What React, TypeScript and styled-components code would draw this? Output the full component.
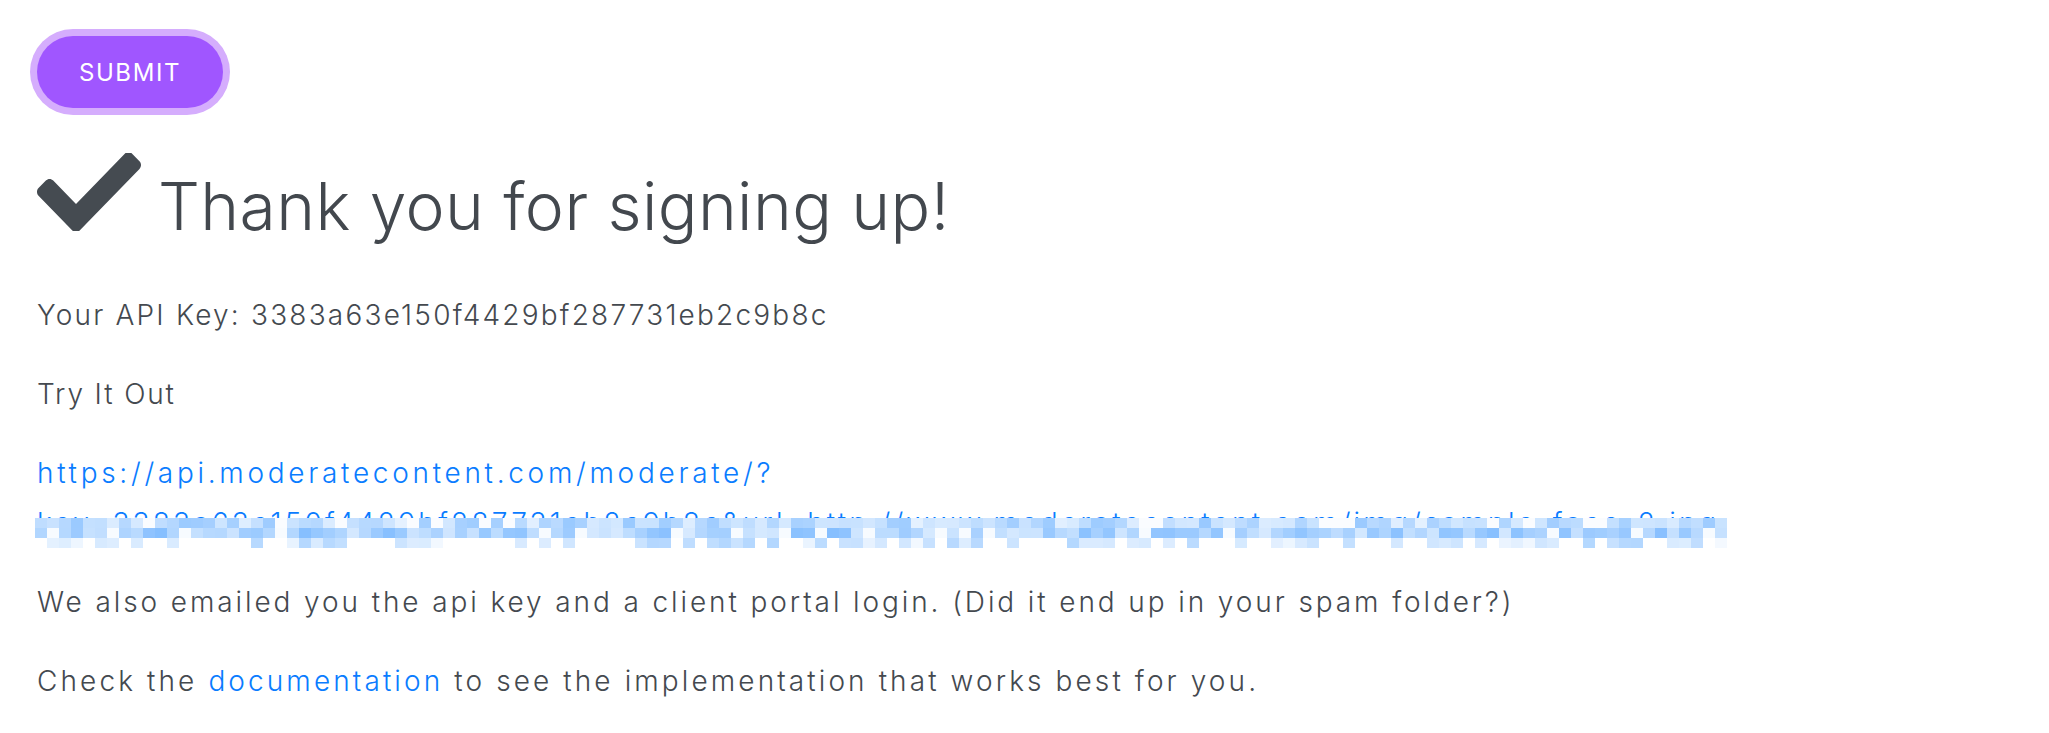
import React from "react";
import styled, { createGlobalStyle } from "styled-components";

const GlobalStyle = createGlobalStyle`
  html, body { margin: 0; padding: 0; background: #ffffff; }
  body { font-family: Inter, "Noto Sans", "Liberation Sans", sans-serif; color: #44494f; }
`;

const Page = styled.div`
  padding: 36px 37px 0 37px;
`;

const SubmitButton = styled.button`
  display: block;
  width: 186px;
  height: 72px;
  margin: 0;
  padding: 0;
  border: none;
  border-radius: 36px;
  background: #a056ff;
  box-shadow: 0 0 0 7px #d5adfd;
  color: #ffffff;
  font-family: Inter, "Liberation Sans", sans-serif;
  font-size: 24px;
  font-weight: 400;
  letter-spacing: 1.6px;
  text-transform: uppercase;
  cursor: pointer;
`;

const Heading = styled.h1`
  display: flex;
  align-items: flex-start;
  gap: 17px;
  margin: 59px 0 43.6px 0;
  font-size: 66px;
  line-height: 79.2px;
  font-weight: 300;
  letter-spacing: 0.4px;
  color: #43484e;
`;

const CheckSvg = styled.svg`
  flex: none;
  width: 104px;
  height: 78px;
  margin-top: -14px;
  fill: #454b51;
`;

const Para = styled.p<{ $spacing?: number }>`
  margin: 0 0 28.6px 0;
  font-size: 28px;
  line-height: 50.4px;
  font-weight: 300;
  letter-spacing: ${(p) => p.$spacing ?? 2.9}px;
  color: #44494f;
  white-space: nowrap;
`;

const Link = styled.a`
  color: #0a7cff;
  text-decoration: none;
`;

const Redacted = styled.span`
  position: relative;
  display: inline-block;
  letter-spacing: 3.2px;
`;

const Mosaic = styled.span`
  position: absolute;
  left: -2px;
  top: 20px;
  display: grid;
  grid-template-columns: repeat(141, 12px);
  grid-auto-rows: 10px;
`;

const Cell = styled.span`
  display: block;
`;

const CheckIcon = () => (
  <CheckSvg viewBox="0 69 512 373" preserveAspectRatio="none">
    <path d="M173.898 439.404l-166.4-166.4c-9.997-9.997-9.997-26.206 0-36.204l36.203-36.204c9.997-9.998 26.207-9.998 36.204 0L192 312.69 432.095 72.596c9.997-9.997 26.207-9.997 36.204 0l36.203 36.204c9.997 9.997 9.997 26.206 0 36.204l-294.4 294.401c-9.998 9.997-26.207 9.997-36.204-.001z" />
  </CheckSvg>
);

function buildCells() {
  let seed = 1234567;
  const rand = () => {
    seed = (seed * 1103515245 + 12345) % 2147483648;
    return seed / 2147483648;
  };
  const cells: string[] = [];
  const cols = 141;
  for (let r = 0; r < 3; r++) {
    for (let c = 0; c < cols; c++) {
      const v = rand();
      let a: number;
      if (r === 2) {
        a = v < 0.55 ? 0 : 0.04 + rand() * 0.26;
      } else if (r === 0) {
        a = v < 0.12 ? 0.02 : 0.1 + rand() * 0.3;
      } else {
        a = v < 0.1 ? 0.03 : 0.16 + rand() * 0.32;
      }
      const mix = (base: number) => Math.round(255 - (255 - base) * a);
      cells.push(`rgb(${mix(0)}, ${mix(120)}, 255)`);
    }
  }
  return cells;
}

const mosaicCells = buildCells();

export default function App() {
  return (
    <>
      <GlobalStyle />
      <Page>
        <SubmitButton type="button">Submit</SubmitButton>
        <Heading>
          <CheckIcon />
          <span>Thank you for signing up!</span>
        </Heading>
        <Para $spacing={2.2}>Your API Key: 3383a63e150f4429bf287731eb2c9b8c</Para>
        <Para $spacing={1.85}>Try It Out</Para>
        <Para $spacing={3.7}>
          <Link href="#">
            https://api.moderatecontent.com/moderate/?
            <br />
            <Redacted>
              key=3383a63e150f4429bf287731eb2c9b8c&amp;url=http://www.moderatecontent.com/img/sample_face_2.jpg
              <Mosaic aria-hidden="true">
                {mosaicCells.map((bg, i) => (
                  <Cell key={i} style={{ background: bg }} />
                ))}
              </Mosaic>
            </Redacted>
          </Link>
        </Para>
        <Para $spacing={2.9}>We also emailed you the api key and a client portal login. (Did it end up in your spam folder?)</Para>
        <Para $spacing={3.1}>
          Check the <Link href="#">documentation</Link> to see the implementation that works best for you.
        </Para>
      </Page>
    </>
  );
}
